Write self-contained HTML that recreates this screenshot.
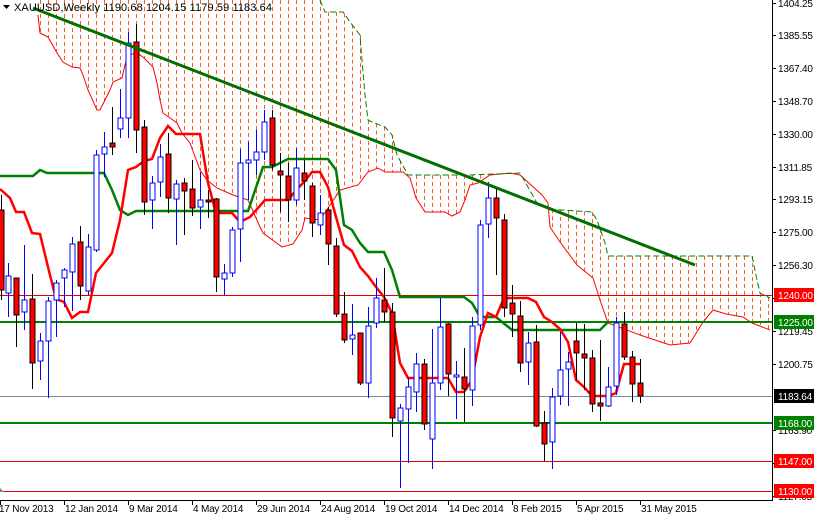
<!DOCTYPE html>
<html><head><meta charset="utf-8">
<style>
html,body{margin:0;padding:0;background:#fff;width:814px;height:516px;overflow:hidden}
svg{display:block}
text{font-family:"Liberation Sans",Arial,sans-serif;font-size:10px;letter-spacing:-0.2px}
text.t{font-size:11px;letter-spacing:0.1px}
</style></head><body>
<svg id="c" width="814" height="516" xmlns="http://www.w3.org/2000/svg"></svg>
<script>
var s='';
function P(a){return a.map(function(p){return p[0]+','+p[1]}).join(' ');}
function interp(a,x){for(var i=0;i<a.length-1;i++){if(x>=a[i][0]&&x<=a[i+1][0]){var t=(x-a[i][0])/(a[i+1][0]-a[i][0]||1);return a[i][1]+t*(a[i+1][1]-a[i][1]);}}return null;}
var U=[[38,0],[320,0],[325,12],[343,12],[350,22],[360,35],[362,60],[365,95],[368,120],[372,122],[385,127],[392,135],[397,155],[408,175],[470,175],[520,173],[528,187],[537,203],[548,209],[592,212],[597,220],[605,243],[608,256],[752,256],[757,280],[760,293],[770,298]];
var L=[[38,15],[40,33],[48,37],[57,53],[63,62],[72,67],[80,68],[83,75],[88,90],[97,110],[100,110],[110,90],[113,82],[122,78],[125,65],[128,55],[137,53],[143,57],[153,67],[157,83],[160,100],[163,113],[177,123],[182,133],[190,143],[200,170],[207,180],[217,188],[233,195],[248,200],[260,227],[263,233],[282,247],[293,244],[302,230],[305,218],[320,220],[340,190],[358,185],[368,172],[378,168],[385,172],[403,172],[410,178],[416,198],[425,212],[445,212],[452,216],[460,212],[465,200],[470,185],[478,183],[490,175],[510,173],[520,175],[542,195],[548,203],[550,227],[560,242],[577,265],[593,278],[600,300],[608,323],[640,335],[670,345],[690,343],[703,322],[713,310],[726,314],[743,317],[752,323],[770,330]];
for(var x=40;x<=768;x+=8){var u=interp(U,x),l=interp(L,x);if(u!==null&&l!==null&&l-u>3){s+='<line x1="'+(x+0.5)+'" y1="'+u+'" x2="'+(x+0.5)+'" y2="'+l+'" stroke="#ff5a1e" stroke-width="1" stroke-dasharray="4,3"/>';}}
s+='<polyline points="'+P(L)+'" fill="none" stroke="#ff0000" stroke-width="1"/>';
s+='<polyline points="'+P(U.slice(1))+'" fill="none" stroke="#008000" stroke-width="1" stroke-dasharray="6,3"/>';
s+='<line x1="0" y1="295.5" x2="772" y2="295.5" stroke="#e00000" stroke-width="1"/>';
s+='<line x1="0" y1="322" x2="772" y2="322" stroke="#008000" stroke-width="2"/>';
s+='<line x1="0" y1="396.5" x2="772" y2="396.5" stroke="#778899" stroke-width="1"/>';
s+='<line x1="0" y1="423" x2="772" y2="423" stroke="#008000" stroke-width="2"/>';
s+='<line x1="0" y1="461.5" x2="772" y2="461.5" stroke="#e00000" stroke-width="1"/>';
s+='<line x1="0" y1="491.5" x2="772" y2="491.5" stroke="#e00000" stroke-width="1"/>';
var K=[[0,176],[33,176],[40,170],[47,173],[104,173],[112,190],[120,210],[128,215],[136,211],[248,211],[263,167],[272,167],[288,159],[328,159],[336,170],[344,225],[352,230],[360,243],[368,252],[384,252],[392,270],[400,297],[464,297],[472,303],[480,317],[496,317],[512,330],[600,330],[608,322]];
s+='<polyline points="'+P(K)+'" fill="none" stroke="#008000" stroke-width="2.5"/>';
var T=[[0,189],[10,198],[16,212],[24,212],[32,233],[40,234],[48,267],[56,299],[64,302],[72,318],[80,312],[88,312],[96,273],[104,263],[112,253],[120,220],[128,170],[136,167],[144,161],[152,159],[160,138],[168,126],[176,134],[200,134],[208,183],[216,213],[232,213],[240,222],[250,217],[265,200],[288,200],[297,189],[304,182],[312,172],[320,172],[328,187],[336,217],[344,245],[352,251],[360,267],[368,276],[376,287],[384,297],[392,313],[400,363],[408,378],[448,378],[456,392],[464,392],[472,380],[480,337],[488,313],[496,317],[504,298],[528,298],[536,302],[544,317],[552,322],[560,329],[568,342],[576,380],[584,387],[592,396],[608,396],[616,393],[624,364],[640,364]];
s+='<polyline points="'+P(T)+'" fill="none" stroke="#ff0000" stroke-width="2.5"/>';
var C=[[1,'r',210,290,195,300],[8,'b',276,293,263,317],[16,'r',278,315,278,347],[24,'b',300,312,245,330],[32,'r',299,363,274,389],[40,'b',341,361,333,380],[48,'b',301,341,297,398],[56,'b',283,300,280,337],[64,'b',270,278,268,307],[72,'b',244,272,237,311],[80,'r',242,286,226,300],[88,'b',247,291,234,295],[96,'b',155,250,150,252],[104,'b',147,154,132,177],[112,'r',143,147,107,155],[120,'b',118,129,89,138],[128,'b',43,118,32,138],[136,'r',42,130,24,153],[144,'r',127,202,120,215],[152,'b',183,200,176,229],[160,'b',157,182,144,197],[168,'r',154,198,133,213],[176,'b',184,199,180,245],[184,'r',183,191,178,235],[192,'r',189,208,160,216],[200,'b',200,207,172,229],[208,'r',200,202,190,218],[216,'r',199,277,198,292],[224,'b',273,279,264,295],[232,'b',230,273,227,277],[240,'b',163,229,149,262],[248,'b',160,163,142,200],[256,'b',152,160,130,175],[264,'b',122,152,110,160],[272,'r',118,165,110,170],[280,'r',171,175,153,212],[288,'r',176,200,163,222],[296,'b',168,200,148,205],[304,'r',173,181,160,200],[312,'r',186,223,183,237],[320,'b',213,225,195,235],[328,'r',210,244,207,265],[336,'r',246,314,238,317],[344,'r',314,340,292,343],[352,'b',335,339,304,355],[360,'r',333,383,333,385],[368,'b',326,383,307,398],[376,'b',298,323,278,328],[384,'r',300,312,268,322],[392,'r',312,418,303,437],[400,'b',408,421,404,488],[408,'b',387,409,378,463],[416,'b',364,392,353,412],[424,'r',364,424,359,430],[432,'b',383,439,329,469],[440,'b',327,383,298,390],[448,'r',324,374,323,396],[456,'b',375,377,361,419],[464,'r',377,389,348,422],[472,'b',326,390,317,406],[480,'b',225,325,220,330],[488,'b',198,224,182,238],[496,'r',198,218,188,275],[504,'r',220,308,214,317],[512,'r',303,314,285,337],[520,'r',316,363,301,372],[528,'b',343,362,332,385],[536,'r',342,426,325,427],[544,'r',423,444,411,461],[552,'b',397,442,388,469],[560,'b',370,396,332,405],[568,'b',362,369,352,406],[576,'r',341,353,323,380],[584,'r',354,358,324,390],[592,'r',358,404,350,412],[600,'r',403,406,340,421],[608,'b',387,406,367,407],[616,'b',323,386,317,395],[624,'r',324,357,312,360],[632,'r',357,384,351,402],[640,'r',383,396,359,403]];
C.forEach(function(c){var x=c[0]+0.5,col=c[1]=='b'?'#0000ff':'#000';
s+='<line x1="'+x+'" y1="'+c[4]+'" x2="'+x+'" y2="'+c[5]+'" stroke="'+col+'" stroke-width="1"/>';
var h=Math.max(c[3]-c[2],1);
s+='<rect x="'+(c[0]-2)+'" y="'+c[2]+'" width="5" height="'+h+'" fill="'+(c[1]=='b'?'#fff':'#ff0000')+'" stroke="'+col+'" stroke-width="1"/>';});
s+='<line x1="33" y1="8" x2="695" y2="265" stroke="#007000" stroke-width="3"/>';
s+='<rect x="773" y="0" width="41" height="516" fill="#fff"/>';
s+='<rect x="0" y="501" width="814" height="15" fill="#fff"/>';
s+='<line x1="772.5" y1="0" x2="772.5" y2="500" stroke="#000"/>';
s+='<line x1="0" y1="500.5" x2="773" y2="500.5" stroke="#000"/>';
var ax=[[3,'1404.25'],[35,'1385.55'],[68,'1367.40'],[101,'1348.70'],[134,'1330.00'],[167,'1311.85'],[199,'1293.15'],[232,'1275.00'],[265,'1256.30'],[298,'1237.60'],[331,'1219.45'],[364,'1200.75'],[430,'1163.90'],[463,'1145.20'],[496,'1127.05']];
ax.forEach(function(a){s+='<line x1="772" y1="'+a[0]+'.5" x2="776" y2="'+a[0]+'.5" stroke="#000"/><text x="778" y="'+(a[0]+4)+'" fill="#000">'+a[1]+'</text>';});
var lb=[[295,'1240.00','#ff0000','#fff'],[322,'1225.00','#008000','#fff'],[396,'1183.64','#000','#fff'],[423,'1168.00','#008000','#fff'],[461,'1147.00','#ff0000','#fff'],[491,'1130.00','#ff0000','#fff']];
lb.forEach(function(a){s+='<rect x="774" y="'+(a[0]-7)+'" width="40" height="14" fill="'+a[2]+'"/><text x="778" y="'+(a[0]+4)+'" fill="'+a[3]+'">'+a[1]+'</text>';});
var dt=['17 Nov 2013','12 Jan 2014','9 Mar 2014','4 May 2014','29 Jun 2014','24 Aug 2014','19 Oct 2014','14 Dec 2014','8 Feb 2015','5 Apr 2015','31 May 2015'];
dt.forEach(function(d,i){var x=i*64;s+='<line x1="'+(x+0.5)+'" y1="500" x2="'+(x+0.5)+'" y2="505" stroke="#000"/><text x="'+(x+(i?1:-1))+'" y="512" fill="#000">'+d+'</text>';});
s+='<polygon points="0,488 4,492 0,492" fill="#778899"/>';
s+='<polygon points="3,5 10,5 6.5,9" fill="#000"/>';
s+='<text class="t" x="14" y="11" fill="#000">XAUUSD,Weekly  1190.68 1204.15 1179.59 1183.64</text>';
document.getElementById('c').innerHTML=s;
</script>
</body></html>
